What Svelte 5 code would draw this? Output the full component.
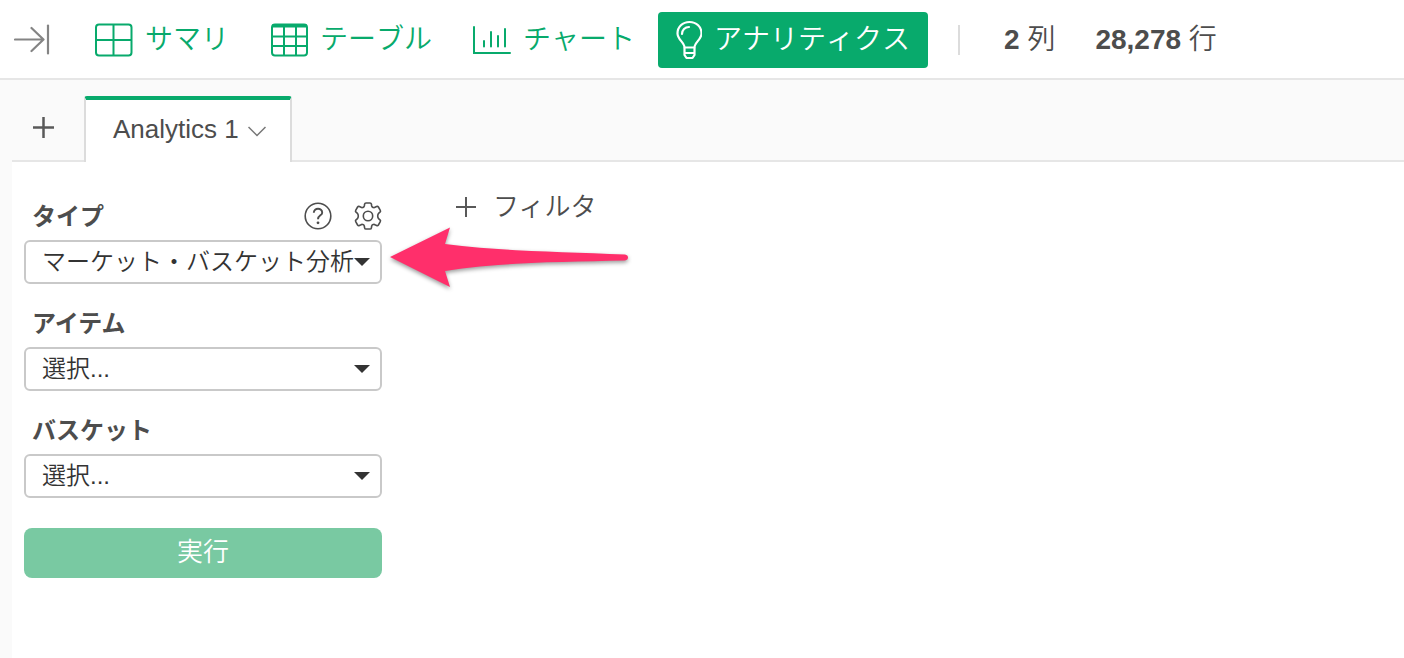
<script>
	const views = [
		{ id: 'summary', label: 'サマリ' },
		{ id: 'table', label: 'テーブル' },
		{ id: 'chart', label: 'チャート' },
		{ id: 'analytics', label: 'アナリティクス' }
	];

	const fields = [
		{ id: 'type', label: 'タイプ', value: 'マーケット・バスケット分析' },
		{ id: 'item', label: 'アイテム', value: '選択...' },
		{ id: 'basket', label: 'バスケット', value: '選択...' }
	];

	let activeView = $state('analytics');
</script>

<div class="page">
	<header class="toolbar">
		<button class="plain collapse" aria-label="collapse">
			<svg width="36" height="32" viewBox="0 0 36 32" fill="none" stroke="#848484" stroke-width="2.200" stroke-linecap="round" stroke-linejoin="round">
				<path d="M1 15.500H29M17.500 4L29.500 15.500L17.500 27" />
				<path d="M34 1.500V29.500" />
			</svg>
		</button>

		<nav>
			{#each views as view}
				<button class="view" class:active={activeView === view.id} onclick={() => (activeView = view.id)}>
					{#if view.id === 'summary'}
						<svg width="38" height="34" viewBox="0 0 38 34" fill="none" stroke="currentColor" stroke-width="2">
							<rect x="1" y="1.500" width="35.500" height="31" rx="3" />
							<path d="M18.500 1V33M1 17H37" />
						</svg>
					{:else if view.id === 'table'}
						<svg width="38" height="34" viewBox="0 0 38 34" fill="none" stroke="currentColor" stroke-width="2">
							<rect x="2" y="1.500" width="35" height="31" rx="3" />
							<path d="M2 3H37" stroke-width="3" />
							<path d="M14 3V33M26 3V33M2 13.500H37M2 23H37" />
						</svg>
					{:else if view.id === 'chart'}
						<svg width="38" height="30" viewBox="0 0 38 30" fill="none" stroke="currentColor" stroke-width="2" stroke-linecap="round">
							<path d="M1 2V28H37" />
							<path d="M11 16V21.500M18 7V21.500M25 11V21.500M32 4V21.500" />
						</svg>
					{:else}
						<svg width="26" height="40" viewBox="0 0 26 40" fill="none" stroke="currentColor" stroke-width="2.200" stroke-linejoin="round" stroke-linecap="round">
							<path d="M8.500 27.500C8.500 22.500 1.500 19.500 1.500 13.500C1.500 7 6.500 2 13.500 2S25.500 7 25.500 13.500C25.500 19.500 18.500 22.500 18.500 27.500Z" />
							<path d="M6 14C6 10 9 7 13 7" />
							<path d="M8.500 28V35L10.500 38H16.500L18.500 35V28M8.500 33H18.500" />
						</svg>
					{/if}
					<span>{view.label}</span>
				</button>
			{/each}
		</nav>

		<div class="counts">
			<span><b>2</b> 列</span>
			<span><b>28,278</b> 行</span>
		</div>
	</header>

	<div class="workspace">
		<div class="tabs">
			<button class="plain add" aria-label="add">
				<svg width="22" height="22" viewBox="0 0 22 22" stroke="#595959" stroke-width="2.500"><path d="M11.500 0V21M1 10.500H22" /></svg>
			</button>
			<button class="tab">
				Analytics 1
				<svg width="18" height="11" viewBox="0 0 18 11" fill="none" stroke="#777" stroke-width="1.500"><path d="M0.500 1L9 9.500L17.500 1" /></svg>
			</button>
		</div>

		<main class="panel">
			<form class="settings" onsubmit={(event) => event.preventDefault()}>
				{#each fields as field}
					<div class="field">
						<div class="field-head">
							<label for={field.id}>{field.label}</label>
							{#if field.id === 'type'}
								<div class="tools">
									<button type="button" class="plain" aria-label="help">
										<svg width="28" height="28" viewBox="0 0 28 28" fill="none" stroke="#4d4d4d" stroke-width="1.600">
											<circle cx="14" cy="14" r="12.800" />
											<path d="M9.800 10.800C9.800 5.300 18.300 5.500 18.200 10.700C18.200 13.500 14 13.300 14 17.200" stroke-width="1.900" />
											<circle cx="14" cy="20.800" r="1.400" fill="#4d4d4d" stroke="none" />
										</svg>
									</button>
									<button type="button" class="plain" aria-label="settings">
										<svg width="28" height="28" viewBox="0 0 28 28" fill="none" stroke="#4d4d4d" stroke-width="1.600" stroke-linejoin="round">
											<path d="M12 1H16Q17.200 1 17.400 2.200L17.700 4Q18 5 19 5.400Q20 5.900 21 5.300L22.600 4.500Q23.700 4 24.400 5L26.300 8.300Q26.900 9.300 26 10.100L24.800 11.200Q23.700 12.200 23.700 14T24.800 16.800L26 17.900Q26.900 18.700 26.300 19.700L24.400 23Q23.700 24 22.600 23.500L21 22.700Q20 22.100 19 22.600Q18 23 17.700 24L17.400 25.800Q17.200 27 16 27H12Q10.800 27 10.600 25.800L10.300 24Q10 23 9 22.600Q8 22.100 7 22.700L5.400 23.500Q4.300 24 3.600 23L1.700 19.700Q1.100 18.700 2 17.900L3.200 16.800Q4.300 15.800 4.300 14T3.200 11.200L2 10.100Q1.100 9.300 1.700 8.300L3.600 5Q4.300 4 5.400 4.500L7 5.300Q8 5.900 9 5.400Q10 5 10.300 4L10.600 2.200Q10.800 1 12 1Z" />
											<circle cx="14" cy="14" r="4.700" />
										</svg>
									</button>
								</div>
							{/if}
						</div>
						<div class="picker">
							<select id={field.id}>
								<option>{field.value}</option>
							</select>
							<svg class="caret" width="16" height="8" viewBox="0 0 16 8"><path d="M0 0H16L8 8Z" fill="#333" /></svg>
							{#if field.id === 'type'}
								<svg class="pointer" width="244" height="70" viewBox="0 0 244 70">
									<path d="M2 33L62 3.500L57 20C110 27 175 28 237 30.500C241 31 241 36 237 36.500C175 38 110 38 57 47L62 63Z" fill="#ff2f6b" />
								</svg>
							{/if}
						</div>
					</div>
				{/each}
				<button class="run" type="submit">実行</button>
			</form>

			<button class="plain filter">
				<svg width="20" height="20" viewBox="0 0 20 20" stroke="#595959" stroke-width="2"><path d="M10 0V20M0 10H20" /></svg>
				フィルタ
			</button>
		</main>
	</div>
</div>

<style>
	:global(body) {
		margin: 0;
	}

	.page {
		display: flex;
		flex-direction: column;
		min-height: 100vh;
		background: #fafafa;
		color: #4d4d4d;
		font-family: "Liberation Sans", "Noto Sans CJK JP", sans-serif;
	}

	button,
	select {
		font-family: inherit;
		font-weight: 350;
		color: inherit;
		cursor: pointer;
	}

	svg {
		display: block;
		flex: none;
	}

	.plain {
		display: flex;
		align-items: center;
		padding: 0;
		border: 0;
		background: none;
	}

	.toolbar {
		display: flex;
		align-items: center;
		padding: 12px 14px 10px;
		border-bottom: 2px solid #e6e6e6;
		background: #fff;
	}

	nav {
		display: flex;
		gap: 5px;
		margin-left: 27px;
		padding-right: 30px;
	}

	.view {
		display: flex;
		align-items: center;
		gap: 12px;
		height: 56px;
		padding: 0 18px;
		border: 0;
		border-radius: 4px;
		background: none;
		color: #08aa6c;
		font-size: 28px;
		font-kerning: none;
		line-height: 56px;
		white-space: nowrap;
	}

	.view.active {
		background: #08aa6c;
		color: #fff;
	}

	.counts {
		display: flex;
		gap: 40px;
		padding-left: 44px;
		border-left: 2px solid #dcdcdc;
		font-size: 28px;
		font-weight: 350;
		line-height: 30px;
		white-space: nowrap;
	}

	.counts b {
		font-weight: 700;
	}

	.workspace {
		display: flex;
		flex: 1;
		flex-direction: column;
		padding-left: 12px;
	}

	.tabs {
		display: flex;
		padding-top: 16px;
		border-bottom: 2px solid #e6e6e6;
	}

	.add {
		width: 72px;
		padding-left: 20px;
	}

	.tab {
		display: flex;
		align-items: center;
		gap: 9px;
		height: 66px;
		margin-bottom: -2px;
		padding: 0 24px 3px 27px;
		border: solid #dcdcdc;
		border-width: 4px 2px 0;
		border-top-color: #08aa6c;
		border-radius: 3px 3px 0 0;
		background: #fff;
		font-size: 26px;
	}

	.tab svg {
		margin-top: 3px;
	}

	.panel {
		display: flex;
		flex: 1;
		align-items: flex-start;
		gap: 74px;
		padding: 28px 12px;
		background: #fff;
	}

	.settings {
		width: 358px;
		padding-top: 10px;
	}

	.field {
		margin-bottom: 23px;
	}

	.field-head {
		display: flex;
		justify-content: space-between;
		height: 34px;
		padding: 0 0 6px 8px;
		font-size: 24px;
		font-weight: 700;
		line-height: 34px;
	}

	.tools {
		display: flex;
		gap: 22px;
		height: 31px;
	}

	.picker {
		position: relative;
		display: grid;
		align-items: center;
	}

	.picker select,
	.caret {
		grid-area: 1 / 1;
	}

	select {
		width: 100%;
		height: 44px;
		padding: 0 0 2px 16px;
		appearance: none;
		border: 2px solid #c9c9c9;
		border-radius: 6px;
		background: #fff;
		color: #333;
		font-size: 24px;
	}

	.caret {
		justify-self: end;
		margin-right: 12px;
		pointer-events: none;
	}

	.pointer {
		position: absolute;
		top: -16px;
		left: 364px;
		filter: drop-shadow(0 2px 2px rgba(0, 0, 0, 0.4));
		pointer-events: none;
	}

	.run {
		width: 100%;
		height: 50px;
		margin-top: 7px;
		padding: 0 0 8px;
		border: 0;
		border-radius: 8px;
		background: #79c9a2;
		color: #fff;
		font-size: 26px;
	}

	.filter {
		gap: 17px;
		font-size: 26px;
		line-height: 34px;
	}
</style>
